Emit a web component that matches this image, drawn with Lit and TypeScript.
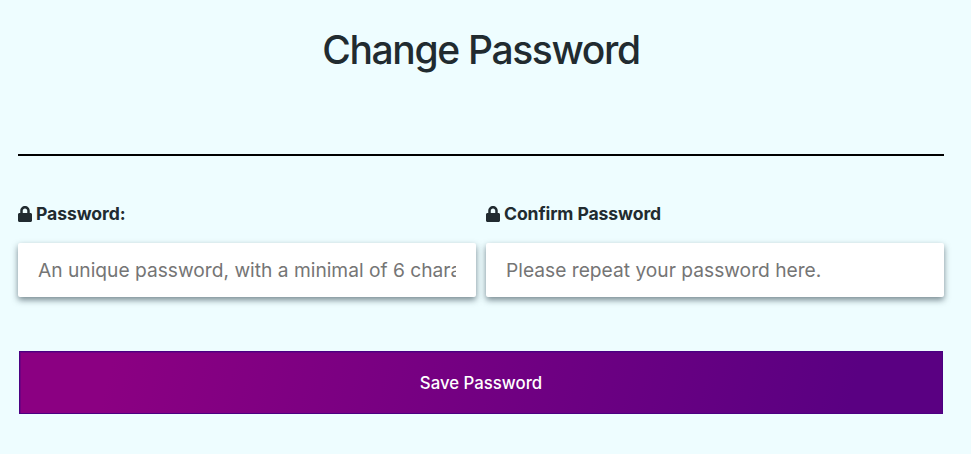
import { LitElement, html, css } from "lit";
import { customElement } from "lit/decorators.js";

const lock = html`<svg class="lock" viewBox="0 0 448 512" aria-hidden="true"><path fill="currentColor" d="M400 224h-24v-72C376 68.200 307.800 0 224 0S72 68.200 72 152v72H48c-26.500 0-48 21.500-48 48v192c0 26.500 21.500 48 48 48h352c26.500 0 48-21.500 48-48V272c0-26.500-21.500-48-48-48zm-104 0H152v-72c0-39.700 32.300-72 72-72s72 32.300 72 72v72z"/></svg>`;

@customElement("app-root")
export class AppRoot extends LitElement {
  static styles = css`
    :host {
      display: block;
      min-height: 454px;
      box-sizing: border-box;
      padding: 0 27px 0 18px;
      background: #eefdff;
      color: #212b30;
      font-family: Inter, "Liberation Sans", sans-serif;
      overflow: hidden;
    }
    h1 {
      margin: 0;
      padding-top: 27px;
      height: 154px;
      box-sizing: border-box;
      text-align: center;
      font-size: 39px;
      line-height: 46px;
      font-weight: 540;
      letter-spacing: -1.35px;
    }
    hr {
      margin: 0;
      border: 0;
      height: 2px;
      background: #000;
    }
    .fields {
      display: grid;
      grid-template-columns: 1fr 1fr;
      column-gap: 10px;
      padding-top: 47px;
    }
    label {
      display: flex;
      align-items: center;
      gap: 4px;
      height: 20px;
      margin-bottom: 20px;
      font-size: 17.6px;
      font-weight: 700;
      letter-spacing: -0.1px;
    }
    .lock {
      width: 14px;
      height: 16px;
      flex: none;
      position: relative;
      top: 1px;
    }
    input {
      display: block;
      width: 100%;
      height: 54px;
      box-sizing: border-box;
      padding: 0 20px;
      border: 0;
      border-radius: 2px;
      outline: 0;
      background: #fff;
      font: 400 19.2px Inter, "Liberation Sans", sans-serif;
      box-shadow: 0 3px 6px rgba(40, 60, 70, 0.6);
    }
    input::placeholder {
      color: #757575;
      opacity: 1;
    }
    button {
      display: block;
      width: calc(100% - 2px);
      height: 63px;
      margin: 54px 1px 0;
      border: 1px solid #4b0082;
      background: linear-gradient(105deg, #8b0082 0%, #8b0082 10%, #5a0082 90%);
      box-shadow: inset 1px 1px 0 rgba(75, 0, 130, 0.4);
      color: #fff;
      font: 500 16.8px Inter, "Liberation Sans", sans-serif;
    }
  `;

  render() {
    return html`
      <h1>Change Password</h1>
      <hr />
      <div class="fields">
        <div>
          <label for="p1">${lock}Password:</label>
          <input id="p1" type="password" placeholder="An unique password, with a minimal of 6 characters." />
        </div>
        <div>
          <label for="p2">${lock}Confirm Password</label>
          <input id="p2" type="password" placeholder="Please repeat your password here." />
        </div>
      </div>
      <button type="button">Save Password</button>
    `;
  }
}
